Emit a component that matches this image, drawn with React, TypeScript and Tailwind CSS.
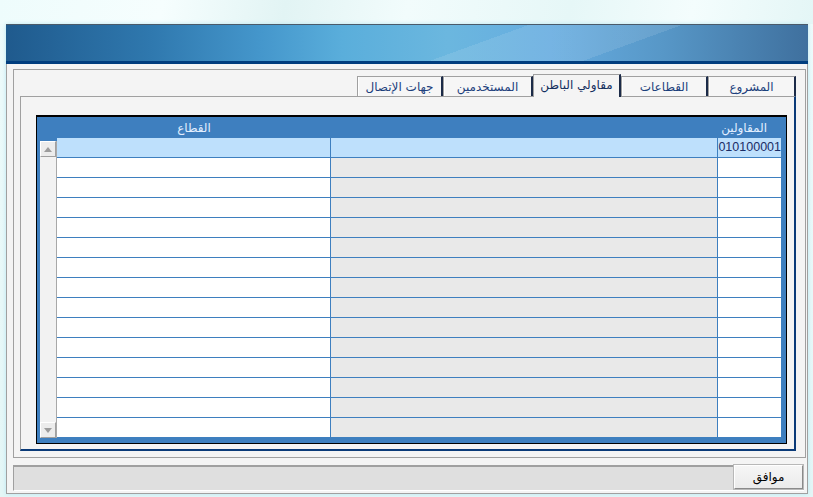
import React from 'react'

const tabs = [
  { label: 'جهات الإتصال', w: 'w-[86px]', active: false },
  { label: 'المستخدمين', w: 'w-[90px]', active: false },
  { label: 'مقاولي الباطن', w: 'w-[88px]', active: true },
  { label: 'القطاعات', w: 'w-[87px]', active: false },
  { label: 'المشروع', w: 'w-[88px]', active: false },
]

const rows = Array.from({ length: 15 }, (_, i) => i)

function Arrow({ up }: { up: boolean }) {
  return (
    <svg width="8" height="5" viewBox="0 0 8 5">
      <path d={up ? 'M0 5 L4 0 L8 5 Z' : 'M0 0 L4 5 L8 0 Z'} fill="#9c9c9c" />
    </svg>
  )
}

function ScrollButton({ up }: { up: boolean }) {
  return (
    <div className="flex h-[16px] w-[16px] items-center justify-center border border-t-white border-l-white border-r-[#a0a0a0] border-b-[#a0a0a0] bg-[#ececec]">
      <Arrow up={up} />
    </div>
  )
}

function Tab({ label, w, active }: { label: string; w: string; active: boolean }) {
  return (
    <div
      className={
        active
          ? `relative z-10 -mb-px flex h-[23px] ${w} items-center justify-center border-t border-l border-t-[#a0a0a0] border-l-[#a0a0a0] border-r-2 border-r-[#1c2b48] bg-[#f4f4f4] pb-[2px] text-[12px] text-[#14305f]`
          : `flex h-[20px] ${w} items-center justify-center border-t border-l border-t-[#a0a0a0] border-l-[#a0a0a0] border-r-2 border-r-[#1c2b48] bg-[#f6f6f6] text-[12px] text-[#1c3f7c] shadow-[inset_1px_0_0_#ffffff]`
      }
    >
      {label}
    </div>
  )
}

export default function App() {
  return (
    <div className="h-[497px] w-[813px] overflow-hidden bg-[linear-gradient(180deg,#eefbfb_0%,#e4f6f6_100%)] font-['Tahoma','DejaVu_Sans',sans-serif]">
      <div className="h-[24px] bg-[linear-gradient(100deg,#eefcfc_0%,#f6fefe_20%,#e2f4f4_35%,#f2fcfc_50%,#e6f7f7_70%,#f4fdfd_85%,#e4f6f6_100%)]" />
      <div className="ml-[6px] flex h-[470px] w-[802px] flex-col shadow-[0_0_4px_#b8e6f2]">
        {/* title bar */}
        <div className="h-[37px] border-t border-[#4a5a6a] bg-[linear-gradient(160deg,rgba(255,255,255,0)_0%,rgba(255,255,255,0)_58%,rgba(255,255,255,0.10)_58%,rgba(255,255,255,0.10)_75%,rgba(0,0,0,0)_75%),linear-gradient(90deg,#1f5a8d_0%,#2f78ae_18%,#4597cc_32%,#5aaedb_42%,#6bb7df_55%,#66ace0_68%,#5797c7_82%,#3f709e_100%)]" />
        <div className="h-[3px] bg-[#003d7e]" />
        {/* body */}
        <div className="flex flex-1 flex-col border-x border-b border-[#a0a0a0] bg-[#f4f4f4] pl-[6px] pr-px pt-[5px]">
          {/* outer frame */}
          <div className="flex h-[389px] flex-col border border-[#a0a0a0] pl-[6px] pr-[9px] pt-[4px]">
            <div className="flex h-[22px] items-end justify-end">
              {tabs.map((t) => (
                <Tab key={t.label} label={t.label} w={t.w} active={t.active} />
              ))}
            </div>
            {/* tab page */}
            <div className="h-[355px] border-t border-l border-[#a0a0a0] border-r-2 border-b-2 border-r-[#0a3a78] border-b-[#0a3a78] pl-[15px] pt-[18px]">
              {/* grid */}
              <div className="flex h-[329px] w-[751px] flex-col border border-t-2 border-black bg-[#3e7fbf] text-[12px]">
                <div className="flex h-[21px] shrink-0 items-center text-[#e3efff]">
                  <div className="w-[20px]" />
                  <div className="w-[274px] text-center">القطاع</div>
                  <div className="w-[387px]" />
                  <div className="w-[63px] pr-[14px] text-right whitespace-nowrap">المقاولين</div>
                </div>
                <div className="flex h-[300px] pl-[3px] pr-[5px]">
                  <div className="flex h-[300px] w-[17px] flex-col pt-[3px]">
                    <div className="flex flex-1 flex-col justify-between border-r border-[#a8a8a8] bg-[#f2f2f2]">
                      <ScrollButton up />
                      <ScrollButton up={false} />
                    </div>
                  </div>
                  <div className="flex flex-1 flex-col">
                    {rows.map((i) => (
                      <div key={i} className="flex h-[20px] shrink-0 border-b border-[#3e7fbf]">
                        <div className={`w-[274px] border-r border-[#3e7fbf] ${i === 0 ? 'bg-[#bee0fc]' : 'bg-white'}`} />
                        <div className={`w-[387px] border-r border-[#3e7fbf] ${i === 0 ? 'bg-[#bee0fc]' : 'bg-[#e9e9e9]'}`} />
                        <div className={`flex flex-1 items-center justify-end overflow-hidden text-[12.5px] leading-none text-[#1a2d66] font-['Liberation_Sans',sans-serif] ${i === 0 ? 'bg-[#bee0fc]' : 'bg-white'}`}>
                          {i === 0 ? '010100001' : ''}
                        </div>
                      </div>
                    ))}
                  </div>
                </div>
              </div>
            </div>
          </div>
          {/* status bar */}
          <div className="mr-[2px] mt-[7px] flex h-[26px] justify-end border-t-2 border-l border-t-[#a0a0a0] border-l-[#a0a0a0] border-b border-r border-b-white border-r-white bg-[#dfdfdf]">
            <div className="-mt-[2px] flex h-[24px] w-[69px] items-center justify-center border border-t-white border-l-white border-b-[#8a8a8a] border-r-[#8a8a8a] bg-[linear-gradient(180deg,#f6f6f6,#ebebeb)] text-[12px] text-black shadow-[0_0_0_1px_#b8b8b8]">
              موافق
            </div>
          </div>
        </div>
      </div>
    </div>
  )
}
